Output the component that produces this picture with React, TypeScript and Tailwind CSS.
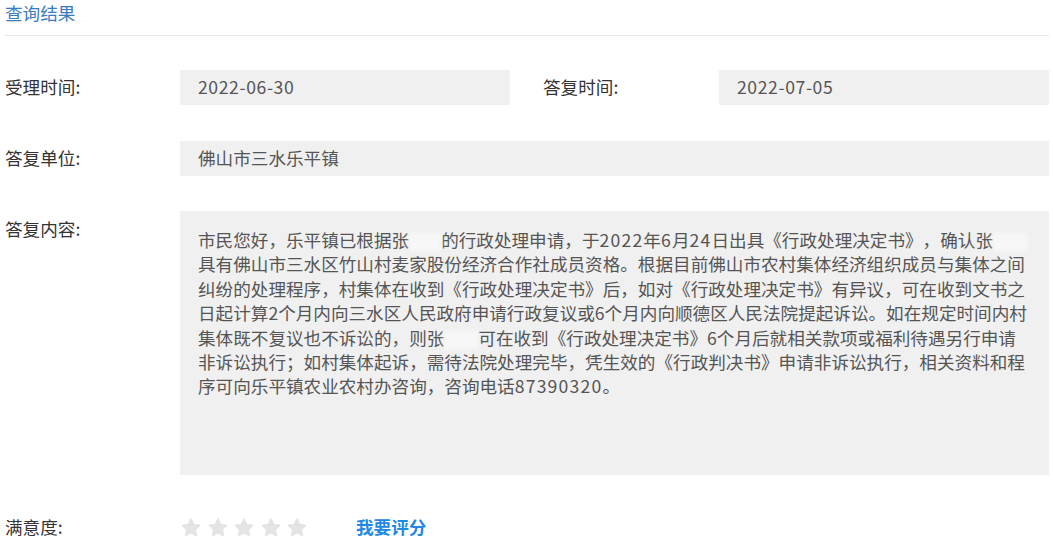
import React from "react";

const F = { fontFamily: '"Noto Sans CJK SC", "Noto Sans", sans-serif' };

function Blank({ w = 32 }: { w?: number }) {
  return <span className="inline-block align-middle h-[18px] bg-[#f7f7f7] blur-[2px]" style={{ width: w }} />;
}

function N({ children }: { children: React.ReactNode }) {
  return <span className="tracking-[1.2px]">{children}</span>;
}

function StarIcon() {
  return (
    <svg width="20" height="19" viewBox="0 0 24 23">
      <path
        d="M12 1.5l3.1 6.6 7.1.9-5.2 4.9 1.3 7.1L12 17.5 5.7 21l1.3-7.1L1.8 9l7.1-.9z"
        fill="#e4e4e4"
        stroke="#e4e4e4"
        strokeWidth="2.2"
        strokeLinejoin="round"
      />
    </svg>
  );
}

export default function App() {
  return (
    <div
      className="w-[1053px] h-[547px] bg-white overflow-hidden pl-[5px] pr-[4px] text-[17.6px] [text-spacing-trim:space-all]"
      style={F}
    >
      <div className="h-[25px] leading-[25px] text-[#3a7cc0]">查询结果</div>
      <div className="mt-[10px] h-px bg-[#e8e8e8]" />

      <div className="mt-[34px] flex h-[35px] leading-[34px]">
        <div className="w-[175px] text-[#333]">受理时间:</div>
        <div className="w-[330px] bg-[#f0f0f0] pl-[18px] text-[#555] tracking-[0.6px]">2022-06-30</div>
        <div className="w-[209px] pl-[33px] text-[#333]">答复时间:</div>
        <div className="flex-1 bg-[#f0f0f0] pl-[18px] text-[#555] tracking-[0.6px]">2022-07-05</div>
      </div>

      <div className="mt-[36px] flex h-[35px] leading-[34px]">
        <div className="w-[175px] text-[#333]">答复单位:</div>
        <div className="flex-1 bg-[#f0f0f0] pl-[18px] text-[#555]">佛山市三水乐平镇</div>
      </div>

      <div className="mt-[35px] flex h-[264px]">
        <div className="w-[175px] leading-[35px] text-[#333]">答复内容:</div>
        <div className="flex-1 bg-[#f0f0f0] pl-[18px] pt-[17px] text-[#555] leading-[24.4px] whitespace-nowrap">
          <div>
            市民您好，乐平镇已根据张<Blank />的行政处理申请，于<N>2022</N>年<N>6</N>月<N>24</N>日出具《行政处理决定书》，确认张<Blank w={34} />
          </div>
          <div>具有佛山市三水区竹山村麦家股份经济合作社成员资格。根据目前佛山市农村集体经济组织成员与集体之间</div>
          <div>纠纷的处理程序，村集体在收到《行政处理决定书》后，如对《行政处理决定书》有异议，可在收到文书之</div>
          <div>日起计算2个月内向三水区人民政府申请行政复议或6个月内向顺德区人民法院提起诉讼。如在规定时间内村</div>
          <div>
            集体既不复议也不诉讼的，则张<Blank w={34} />可在收到《行政处理决定书》6个月后就相关款项或福利待遇另行申请
          </div>
          <div>非诉讼执行；如村集体起诉，需待法院处理完毕，凭生效的《行政判决书》申请非诉讼执行，相关资料和程</div>
          <div>
            序可向乐平镇农业农村办咨询，咨询电话<N>87390320</N>。
          </div>
        </div>
      </div>

      <div className="mt-[35px] flex h-[35px] items-center">
        <div className="w-[175px] text-[#333]">满意度:</div>
        <div className="flex items-center gap-[6.5px] pl-[1px]">
          <StarIcon />
          <StarIcon />
          <StarIcon />
          <StarIcon />
          <StarIcon />
        </div>
        <div className="ml-[49px] font-bold text-[#2188e8]">我要评分</div>
      </div>
    </div>
  );
}
